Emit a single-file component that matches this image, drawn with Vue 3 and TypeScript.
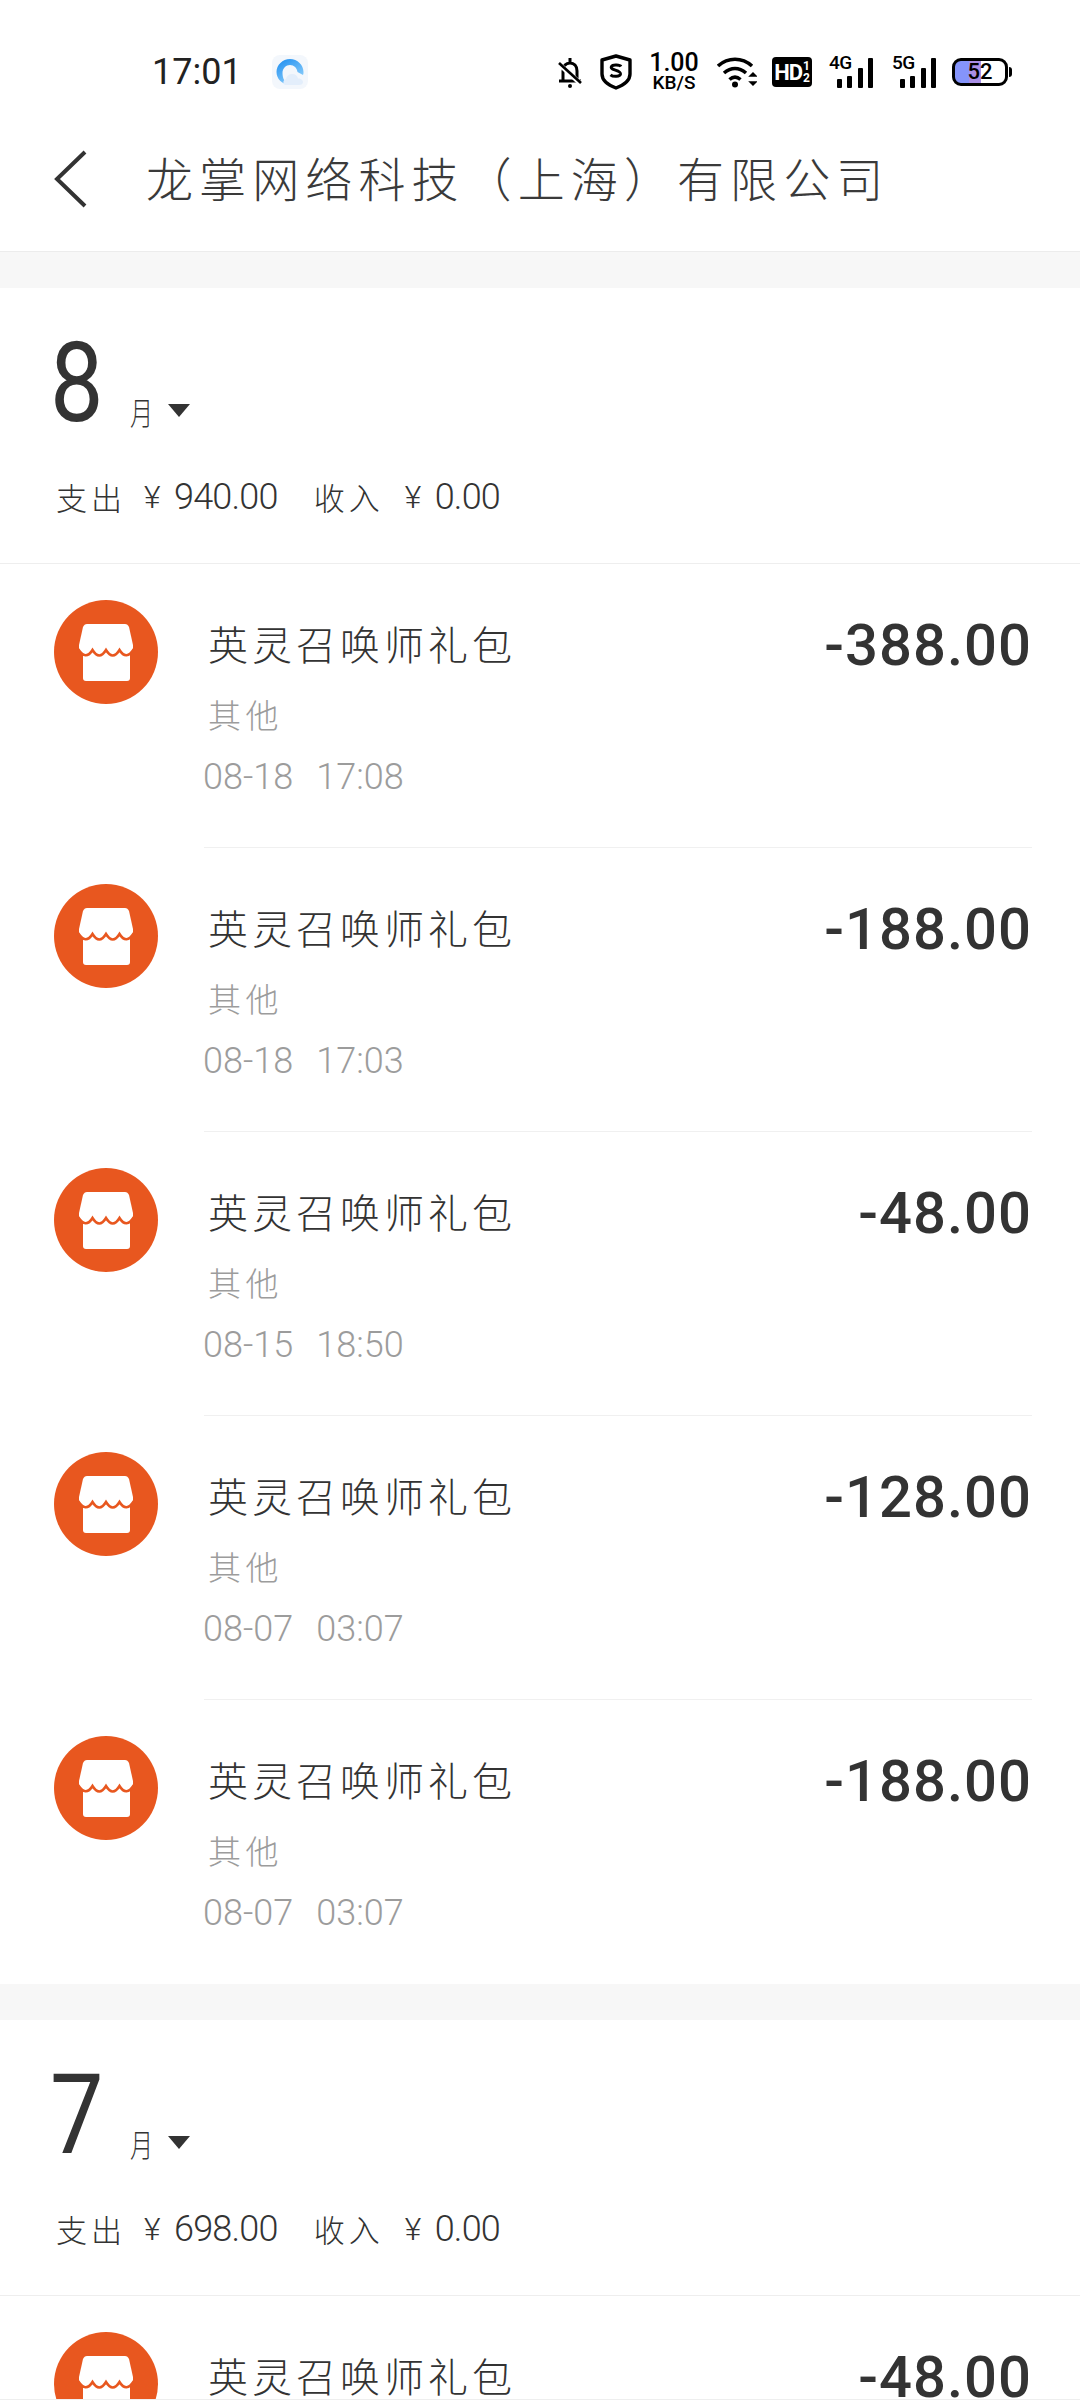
<script setup lang="ts">
interface Row { amount: string; date?: string; time?: string }
interface Month { month: string; spend: string; income: string; rows: Row[] }

const months: Month[] = [
  {
    month: '8',
    spend: '940.00',
    income: '0.00',
    rows: [
      { amount: '-388.00', date: '08-18', time: '17:08' },
      { amount: '-188.00', date: '08-18', time: '17:03' },
      { amount: '-48.00', date: '08-15', time: '18:50' },
      { amount: '-128.00', date: '08-07', time: '03:07' },
      { amount: '-188.00', date: '08-07', time: '03:07' },
    ],
  },
  {
    month: '7',
    spend: '698.00',
    income: '0.00',
    rows: [{ amount: '-48.00' }],
  },
]
</script>

<template>
  <div class="page">
    <div class="status">
      <span class="clock">17:01</span>
      <svg class="app-icon" width="36" height="34" viewBox="0 0 36 34">
        <defs>
          <linearGradient id="ringGrad" x1="0" y1="0" x2="0.6" y2="1">
            <stop offset="0" stop-color="#1a8cf0" />
            <stop offset="1" stop-color="#8fd0fb" />
          </linearGradient>
        </defs>
        <rect x="0" y="0" width="36" height="34" rx="8" fill="#f3f7fc" />
        <path d="M18 4C10.500 4 4.500 10 4.500 17S10 29 17 30c-4-2-6.500-6.500-6.500-12 0-4.500 3.500-8 7.500-8s7 3 7.500 7l5.500 3c.5-1 .5-2 .5-3C31.500 10 25.500 4 18 4z" fill="url(#ringGrad)" />
        <path d="M13 30c-2-1-2.500-5 1-6 .5-3 3-5 6-5 3.500 0 5.500 2 6 4.500 3.500 0 5 2 5 3.500 0 2-1.500 3-4 3z" fill="#e3eefb" />
      </svg>
      <div class="sys">
        <svg class="bell" width="26" height="32" viewBox="0 0 26 32">
          <path d="M13 2v4M6 24v-9c0-5 3-8 7-8s7 3 7 8v9M2 25h22" fill="none" stroke="#000" stroke-width="3" />
          <path d="M2 8l22 20" stroke="#fff" stroke-width="5" />
          <path d="M2 7l22 20" stroke="#000" stroke-width="2.600" />
          <circle cx="13" cy="30" r="2" fill="#000" />
        </svg>
        <svg class="shield" width="32" height="36" viewBox="0 0 32 36">
          <path d="M16 2l14 4v14c0 6-6 11-14 14C8 31 2 26 2 20V6z" fill="none" stroke="#000" stroke-width="3.400" stroke-linejoin="round" />
          <path d="M21 12.500c-1-1.500-8-2.500-9.500 0-2 4 9.500 3 9 7.500-.5 3-7.500 3-10 .8" fill="none" stroke="#000" stroke-width="3" />
        </svg>
        <div class="speed"><span class="speed-num">1.00</span><span class="speed-unit">KB/S</span></div>
        <svg class="wifi" width="40" height="32" viewBox="0 0 40 32">
          <path d="M1 10C11 1 25 1 35 10M7 17c7-6 15-6 22 0M12.500 23.500c3.500-3 7.500-3 11 0" fill="none" stroke="#000" stroke-width="3.600" />
          <circle cx="18" cy="28.500" r="3" fill="#000" />
          <path d="M33 20l3-3 3 3zM33 26l3 3 3-3z" fill="#000" stroke="#000" stroke-width="1.500" />
        </svg>
        <div class="hd"><span class="hd-text">HD</span><span class="hd-frac"><i>1</i><i>2</i></span></div>
        <div class="net">
          <span class="net-label">4G</span>
          <span class="bars"><i class="b1"></i><i class="b2"></i><i class="b3"></i><i class="b4"></i></span>
        </div>
        <div class="net net-last">
          <span class="net-label">5G</span>
          <span class="bars"><i class="b1"></i><i class="b2"></i><i class="b3"></i><i class="b4"></i></span>
        </div>
        <div class="battery"><span>52</span><i class="nub"></i></div>
      </div>
    </div>

    <header class="nav">
      <svg class="back" width="36" height="58" viewBox="0 0 36 58">
        <path d="M32 2L4 29l28 27" fill="none" stroke="#333" stroke-width="4" />
      </svg>
      <h1 class="title">龙掌网络科技（上海）有限公司</h1>
    </header>

    <section v-for="m in months" :key="m.month" class="month">
      <div class="month-head">
        <div class="month-line">
          <span class="month-num">{{ m.month }}</span>
          <span class="month-unit">月</span>
          <i class="caret"></i>
        </div>
        <div class="summary">
          <span class="cjk">支出</span>
          <span class="yen">¥</span>
          <span class="sum-num">{{ m.spend }}</span>
          <span class="cjk income">收入</span>
          <span class="yen">¥</span>
          <span class="sum-num">{{ m.income }}</span>
        </div>
      </div>
      <div v-for="(r, i) in m.rows" :key="i" class="row">
        <svg class="shop" width="104" height="104" viewBox="0 0 104 104">
          <circle cx="52" cy="52" r="52" fill="#e8571f" />
          <path d="M33 24H71c2 0 3 1 4 3l4 18v4H25v-4l4-18c1-2 2-3 4-3z" fill="#fff" />
          <path d="M29 50H76V78c0 2-1 3-3 3H32c-2 0-3-1-3-3z" fill="#fff" />
          <path d="M25 49Q31.750 59 38.500 49Q45.250 59 52 49Q58.750 59 65.500 49Q72.250 59 79 49" fill="#fff" />
          <path d="M24 49Q31.750 61 38.500 50Q45.250 61 52 50Q58.750 61 65.500 50Q72.250 61 80 49" fill="none" stroke="#e8571f" stroke-width="2.600" />
        </svg>
        <div class="body">
          <div class="info">
            <div class="name">英灵召唤师礼包</div>
            <template v-if="r.date">
              <div class="cat">其他</div>
              <div class="date"><span>{{ r.date }}</span><span>{{ r.time }}</span></div>
            </template>
          </div>
          <div class="amount">{{ r.amount }}</div>
        </div>
      </div>
    </section>
    <div class="foot-line"></div>
  </div>
</template>

<style>
html, body { margin: 0; background: #fff; }
</style>

<style scoped>
.page {
  position: relative;
  width: 1080px;
  height: 2400px;
  overflow: hidden;
  background: #fff;
  color: #333;
  font-family: "Noto Sans CJK SC", "Noto Sans", sans-serif;
}
.status {
  height: 100px;
  display: flex;
  align-items: center;
  padding: 44px 72px 0 152px;
  box-sizing: border-box;
  color: #000;
  font-family: Roboto, sans-serif;
}
.clock { font-size: 36px; line-height: 44px; color: #222; }
.app-icon { margin-left: 30px; }
.sys { margin-left: auto; display: flex; align-items: center; }
.bell { margin-right: 17px; }
.shield { margin-right: 18px; }
.speed { width: 48px; display: flex; flex-direction: column; align-items: center; margin-right: 19px; }
.speed-num { font-size: 25px; line-height: 21px; font-weight: 500; }
.speed-unit { font-size: 19px; line-height: 18px; font-weight: 500; margin-top: 1px; white-space: nowrap; }
.wifi { margin-right: 15px; }
.hd {
  width: 40px; height: 30px; background: #000; color: #fff; border-radius: 4px;
  display: flex; align-items: center; justify-content: center; margin-right: 17px;
}
.hd-text { font-size: 22px; font-weight: 700; letter-spacing: -1px; }
.hd-frac { display: flex; flex-direction: column; margin-left: 1px; }
.hd-frac i { font-style: normal; font-size: 12px; line-height: 12px; font-weight: 700; }
.net { position: relative; width: 44px; height: 32px; margin-right: 19px; }
.net-last { margin-right: 16px; }
.net-label { position: absolute; left: 0; top: -3px; font-size: 19px; line-height: 20px; font-weight: 500; letter-spacing: -.5px; }
.bars { position: absolute; inset: 0; display: flex; align-items: flex-end; justify-content: flex-end; gap: 5.500px; }
.bars i { width: 5px; background: #000; border-radius: 1px; }
.b1 { height: 9px; }
.b2 { height: 12px; }
.b3 { height: 20px; }
.b4 { height: 30px; }
.battery {
  position: relative; width: 56px; height: 28px; box-sizing: border-box; border: 3px solid #000; border-radius: 9px;
  display: flex; align-items: center; justify-content: center;
  background: linear-gradient(90deg, #8594fb 0, #8594fb 28%, #a98fe6 28%, #a98fe6 52%, #fff 52%);
  font-size: 22px; line-height: 22px; font-weight: 500;
}
.nub { position: absolute; right: -7px; top: 6px; width: 3px; height: 10px; background: #000; border-radius: 0 3px 3px 0; }

.nav {
  height: 152px;
  box-sizing: border-box;
  border-bottom: 1px solid #ececec;
  display: flex;
  align-items: center;
  padding: 6px 0 0 53px;
}
.back { flex: none; }
.title {
  margin: -3px 0 0 57px;
  font-size: 47px;
  line-height: 60px;
  font-weight: 300;
  letter-spacing: 6.100px;
  color: #3a3a3a;
  white-space: nowrap;
}

.month { border-top: 36px solid #f7f7f7; }
.month-head { height: 276px; box-sizing: border-box; border-bottom: 1px solid #eee; padding: 36px 0 0 50px; }
.month-line { display: flex; align-items: flex-end; height: 118px; }
.month-num {
  display: block; width: 56px; font-family: Roboto, sans-serif; font-weight: 400;
  font-size: 112px; line-height: 118px; color: #333; transform: scaleX(.85); transform-origin: left center;
}
.month-unit { margin-left: 24px; font-size: 32px; line-height: 38px; font-weight: 300; margin-bottom: 12px; transform: scaleX(.72); transform-origin: left center; }
.caret {
  margin: 0 0 25px 6px;
  width: 0; height: 0;
  border-left: 11px solid transparent; border-right: 11px solid transparent; border-top: 13px solid #333;
}
.summary { display: flex; align-items: center; height: 40px; margin-top: 35px; padding-left: 6px; }
.cjk { font-size: 31px; line-height: 40px; letter-spacing: 4px; font-weight: 300; width: 64px; white-space: nowrap; }
.income { margin-left: 36px; width: 67px; }
.yen { font-family: Roboto, sans-serif; font-weight: 300; font-size: 32px; margin-left: 24px; width: 30px; }
.sum-num { font-family: Roboto, sans-serif; font-weight: 300; font-size: 36px; letter-spacing: -.8px; }

.row { display: flex; height: 284px; padding: 36px 48px 0 54px; box-sizing: border-box; }
.shop { flex: none; }
.body {
  flex: 1; margin-left: 46px; margin-top: -36px; padding-top: 57px;
  display: flex; justify-content: space-between; align-items: flex-start;
  border-bottom: 1px solid #f0f0f0;
}
.row:last-child .body { border-bottom: 0; }
.info { display: flex; flex-direction: column; padding-left: 4px; }
.name { font-size: 40px; line-height: 44px; letter-spacing: 4px; font-weight: 300; color: #333; white-space: nowrap; }
.cat { font-size: 33px; line-height: 40px; margin-top: 29px; letter-spacing: 4.500px; color: #9c9c9c; font-weight: 300; }
.date {
  margin-top: 23px; margin-left: -5px; display: flex; gap: 23px;
  font-family: Roboto, sans-serif; font-weight: 300; font-size: 36px; line-height: 40px; color: #9c9c9c;
}
.amount {
  font-family: Roboto, sans-serif; font-weight: 500; font-size: 58px; line-height: 44px;
  letter-spacing: 1px; color: #333; margin-top: 2px;
}
.foot-line { position: absolute; left: 0; right: 0; bottom: 0; height: 1px; background: #eee; }
</style>
